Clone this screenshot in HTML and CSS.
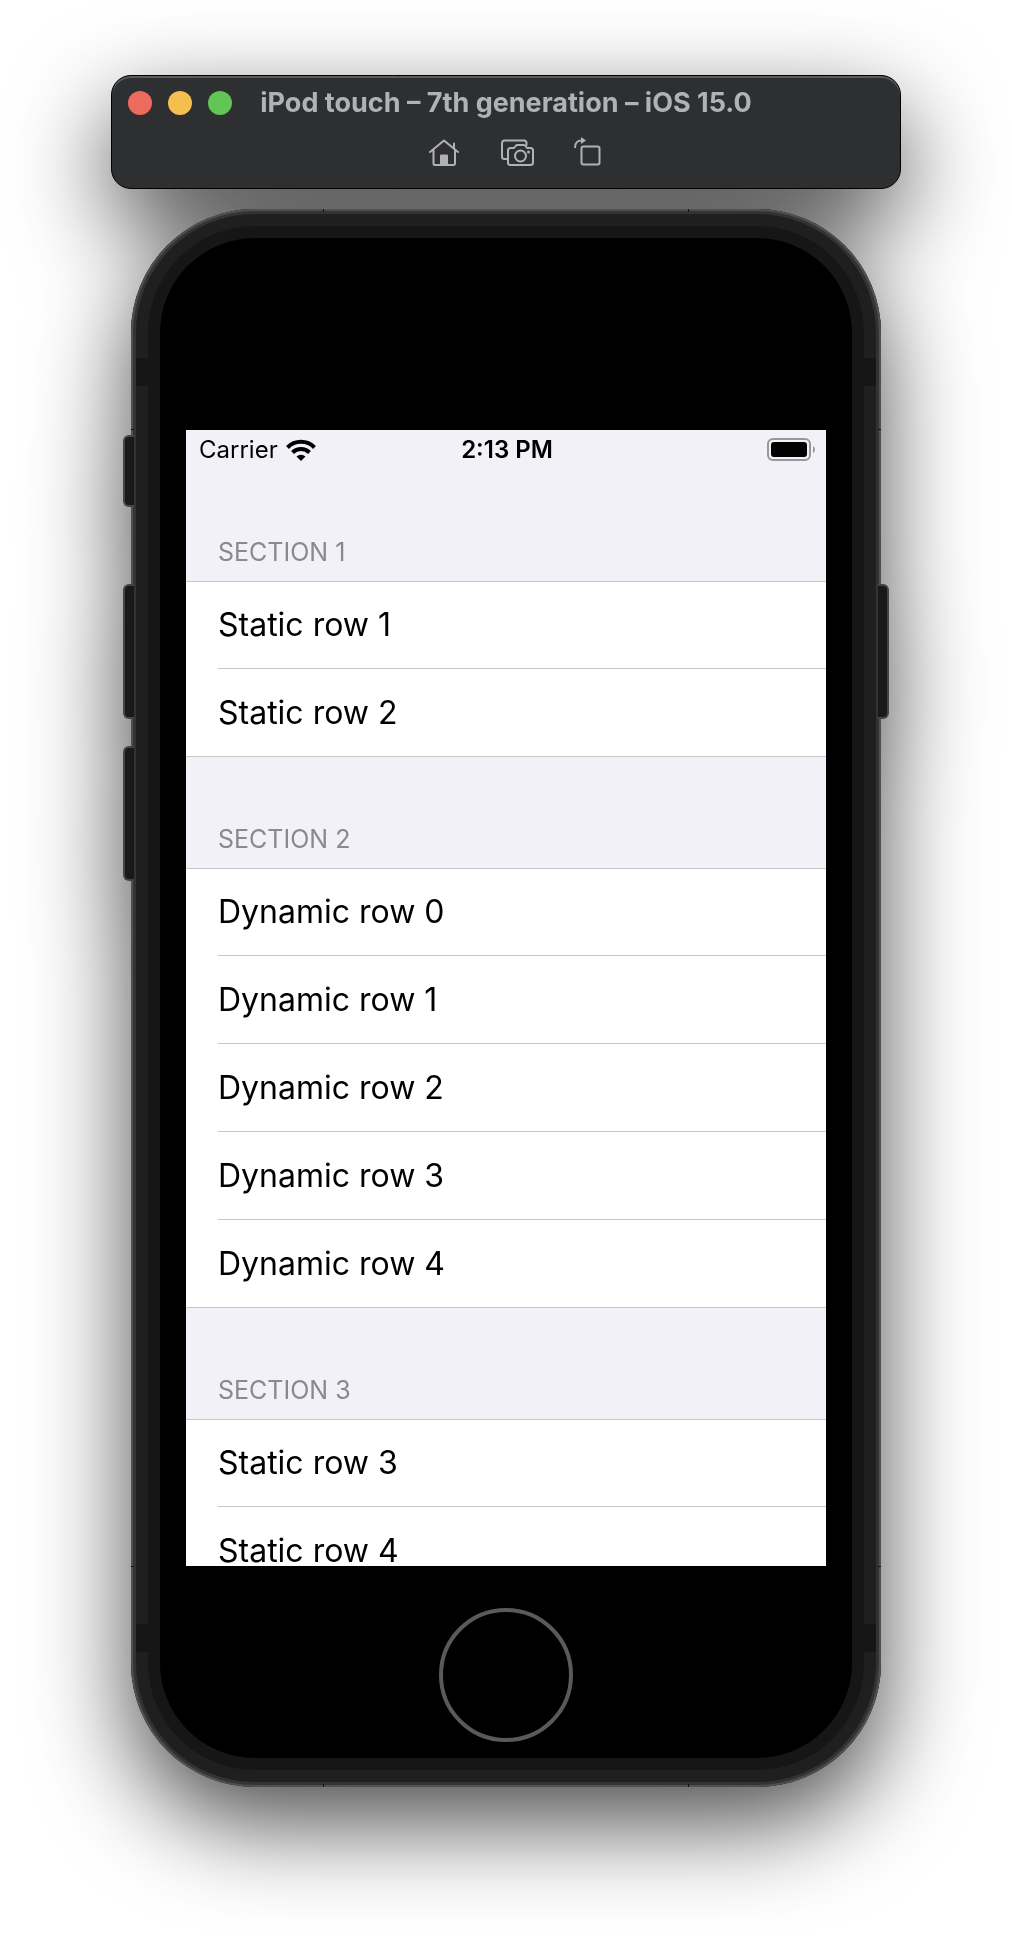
FILE: index.html
```html
<!DOCTYPE html>
<html lang="en">
<head>
<meta charset="utf-8">
<title>iPod touch – 7th generation – iOS 15.0</title>
<meta name="viewport" content="width=device-width, initial-scale=1">
<link rel="stylesheet" href="styles.css">
</head>
<body>
<div class="simulator">
  <header class="window">
    <div class="titlebar">
      <div class="lights">
        <button class="light light-close" type="button" aria-label="Close"></button>
        <button class="light light-minimize" type="button" aria-label="Minimize"></button>
        <button class="light light-zoom" type="button" aria-label="Zoom"></button>
      </div>
      <h1 class="title">iPod touch – 7th generation – iOS 15.0</h1>
    </div>
    <div class="toolbar">
      <button class="tool" type="button" aria-label="Home">
        <svg width="34" height="34" viewBox="0 0 34 34" fill="none" stroke="#b1b2b3" stroke-width="2" stroke-linejoin="round" stroke-linecap="round">
          <path d="M3 16 17 4.500 31 16M6.500 13.500V27.500a1.500 1.500 0 0 0 1.500 1.500H26.500a1.500 1.500 0 0 0 1.500-1.500V13.500M27 12V7.500"/>
          <path d="M14 19.500h6V29h-6z" fill="#b1b2b3"/>
        </svg>
      </button>
      <button class="tool" type="button" aria-label="Screenshot">
        <svg width="34" height="34" viewBox="0 0 34 34" fill="none" stroke="#b1b2b3" stroke-width="2" stroke-linejoin="round" stroke-linecap="round">
          <path d="M7 23H4.500A2.500 2.500 0 0 1 2 20.500V7a2.500 2.500 0 0 1 2.500-2.500H24A2.500 2.500 0 0 1 26.500 7v2"/>
          <path d="M10.500 12H14l2-2.500q.500-.500 1.500-.500h6q1 0 1.500.500l2 2.500h3.500a2.500 2.500 0 0 1 2.500 2.500v12a2.500 2.500 0 0 1-2.500 2.500h-20A2.500 2.500 0 0 1 8 26.500v-12a2.500 2.500 0 0 1 2.500-2.500z"/>
          <circle cx="20.500" cy="20" r="5.500"/>
          <circle cx="28.500" cy="16" r="1.500" fill="#b1b2b3" stroke="none"/>
        </svg>
      </button>
      <button class="tool" type="button" aria-label="Rotate">
        <svg width="34" height="34" viewBox="0 0 34 34" fill="none" stroke="#b1b2b3" stroke-width="2" stroke-linejoin="round">
          <rect x="8.500" y="10.500" width="18" height="18" rx="2"/>
          <path d="M2 12C2 6.500 4 4.500 9 4.500"/>
          <path d="M8 1 13 4.500 8 8z" fill="#b1b2b3" stroke="none"/>
        </svg>
      </button>
    </div>
  </header>

  <div class="phone">
    <div class="frame">
      <span class="band band-top"></span>
      <span class="band band-bottom"></span>
      <div class="bezel">
        <main class="screen">
          <div class="status">
            <div class="carrier">
              <span>Carrier</span>
              <svg width="30" height="22" viewBox="0 0 30 22" aria-hidden="true">
                <g fill="none" stroke="#000" stroke-width="4">
                  <path d="M1.500 8.500a19 19 0 0 1 27 0"/>
                  <path d="M6.500 13.500a12 12 0 0 1 17 0"/>
                </g>
                <path d="M10.500 17.500a6.500 6.500 0 0 1 9 0L15 22z"/>
              </svg>
            </div>
            <time class="clock">2:13 PM</time>
            <svg class="battery" width="48" height="24" viewBox="0 0 48 24" role="img" aria-label="Battery full">
              <rect x="1" y="1" width="42" height="21" rx="5" fill="none" stroke="#98979b" stroke-width="2"/>
              <rect x="4" y="4" width="36" height="15" rx="3"/>
              <path d="M46 8q2 1 2 3.500t-2 3.500z" fill="#98979b"/>
            </svg>
          </div>
          <section>
            <h2 class="heading">SECTION 1</h2>
            <ul class="rows"><li>Static row 1</li><li>Static row 2</li></ul>
          </section>
          <section>
            <h2 class="heading">SECTION 2</h2>
            <ul class="rows"><li>Dynamic row 0</li><li>Dynamic row 1</li><li>Dynamic row 2</li><li>Dynamic row 3</li><li>Dynamic row 4</li></ul>
          </section>
          <section>
            <h2 class="heading">SECTION 3</h2>
            <ul class="rows"><li>Static row 3</li><li>Static row 4</li></ul>
          </section>
        </main>
        <button class="home" type="button" aria-label="Home button"></button>
      </div>
    </div>
    <span class="key key-mute"></span>
    <span class="key key-up"></span>
    <span class="key key-down"></span>
    <span class="key key-power"></span>
  </div>
</div>
</body>
</html>
```
FILE: styles.css
```css
* {
  box-sizing: border-box;
}

body {
  margin: 0;
  background: #fff;
  color: #000;
  font-family: Inter, "Liberation Sans", sans-serif;
  overflow-x: hidden;
}

button {
  margin: 0;
  padding: 0;
  border: 0;
  background: none;
}

h1, h2, ul {
  margin: 0;
  padding: 0;
}

.simulator {
  display: flex;
  flex-direction: column;
  align-items: center;
  gap: 20px;
  padding: 75px 20px 149px;
  filter: drop-shadow(0 36px 48px rgba(0, 0, 0, .7));
}

.window {
  width: 100%;
  max-width: 790px;
  padding-bottom: 18px;
  border: 1px solid #000;
  border-radius: 20px;
  background: #2e2f31;
  box-shadow: inset 0 2px 0 #5a5c5e;
}

.titlebar {
  display: grid;
  grid-template-columns: 1fr auto 1fr;
  align-items: center;
  height: 54px;
  padding: 0 16px;
}

.lights {
  display: flex;
  gap: 16px;
}

.light {
  width: 24px;
  height: 24px;
  border-radius: 50%;
}

.light-close { background: #ed6a5f; }
.light-minimize { background: #f5bf4f; }
.light-zoom { background: #62c554; }

.title {
  color: #b1b2b3;
  font-size: 27px;
  font-weight: 700;
  line-height: 32px;
}

.toolbar {
  display: flex;
  justify-content: center;
  gap: 39px;
  padding: 6px 0 0 22px;
}

.tool,
.tool svg {
  display: block;
}

.phone {
  position: relative;
  width: 100%;
  max-width: 750px;
}

/* Side keys overlap the outer edge of the frame */
.key {
  position: absolute;
  left: -8px;
  width: 11px;
  border: 2px solid #444;
  border-right-width: 0;
  border-radius: 6px 0 0 6px;
  background: #191919;
}

.key-mute { top: 226px; height: 72px; }
.key-up { top: 375px; height: 135px; }
.key-down { top: 537px; height: 135px; }

.key-power {
  top: 375px;
  right: -8px;
  left: auto;
  height: 135px;
  border-width: 2px 2px 2px 0;
  border-radius: 0 6px 6px 0;
}

.frame {
  position: relative;
  padding: 17px;
  border-radius: 124px;
  background: #1f1f1f;
  box-shadow: inset 0 0 0 2px #505050, inset 0 0 0 5px #333;
}

/* Fine seams in the metal rim */
.frame::before {
  content: "";
  position: absolute;
  inset: 0;
  background:
    linear-gradient(#111, #111) left 192px top / 1px 3px,
    linear-gradient(#111, #111) right 192px top / 1px 3px,
    linear-gradient(#111, #111) left 192px bottom / 1px 3px,
    linear-gradient(#111, #111) right 192px bottom / 1px 3px,
    linear-gradient(#111, #111) left top 220px / 3px 1px,
    linear-gradient(#111, #111) right top 220px / 3px 1px,
    linear-gradient(#111, #111) left bottom 220px / 3px 1px,
    linear-gradient(#111, #111) right bottom 220px / 3px 1px;
  background-repeat: no-repeat;
}

.band {
  position: absolute;
  right: 5px;
  left: 5px;
  height: 28px;
  background: #161616;
}

.band-top { top: 149px; }
.band-bottom { bottom: 135px; }

.bezel {
  position: relative;
  display: flex;
  flex-direction: column;
  align-items: center;
  padding: 192px 26px 16px;
  border: 12px solid #161616;
  border-radius: 107px;
  background: #000;
}

.screen {
  width: 100%;
  aspect-ratio: 640 / 1136;
  min-height: 0;
  overflow: hidden;
  background: #f2f1f7;
}

.status {
  display: grid;
  grid-template-columns: 1fr auto 1fr;
  align-items: center;
  height: 40px;
  padding: 0 11px 0 13px;
  font-size: 24px;
  line-height: 28px;
}

.carrier {
  display: flex;
  align-items: center;
  gap: 8px;
}

.clock {
  font-weight: 600;
}

.battery {
  justify-self: end;
}

.heading {
  display: flex;
  align-items: flex-end;
  height: 111px;
  padding: 0 32px 13px;
  color: #8a898e;
  font-size: 25px;
  font-weight: 400;
  line-height: 32px;
}

.rows {
  padding-left: 32px;
  border-top: 1px solid #c6c6c8;
  border-bottom: 1px solid #c6c6c8;
  background: #fff;
  list-style: none;
}

.rows li {
  display: flex;
  align-items: center;
  height: 88px;
  border-bottom: 1px solid #c6c6c8;
  font-size: 32px;
  line-height: 40px;
}

.rows li:first-child,
.rows li:last-child {
  height: 87px;
}

.rows li:last-child {
  border-bottom: 0;
}

.home {
  width: 134px;
  height: 134px;
  margin-top: 42px;
  border: 4px solid #5a5a5a;
  border-radius: 50%;
}
```
